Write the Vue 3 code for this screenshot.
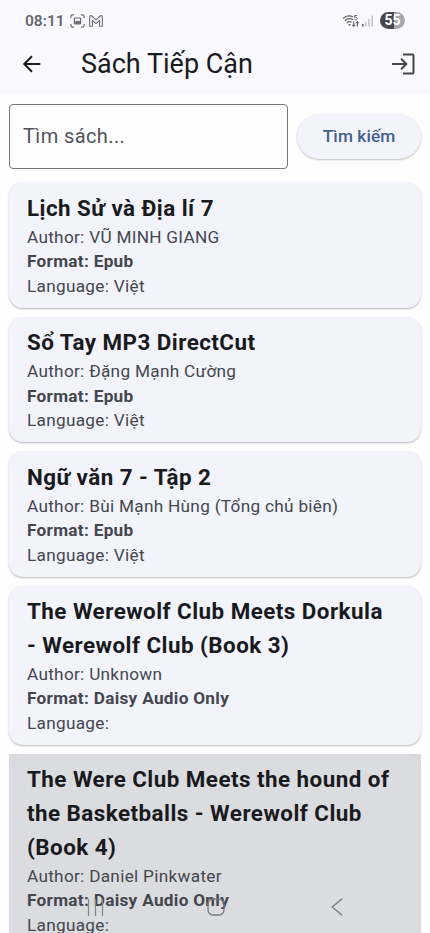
<script setup>
const books = [
  { title: ['Lịch Sử và Địa lí 7'], author: 'VŨ MINH GIANG', format: 'Epub', language: 'Việt' },
  { title: ['Sổ Tay MP3 DirectCut'], author: 'Đặng Mạnh Cường', format: 'Epub', language: 'Việt' },
  { title: ['Ngữ văn 7 - Tập 2'], author: 'Bùi Mạnh Hùng (Tổng chủ biên)', format: 'Epub', language: 'Việt' },
  { title: ['The Werewolf Club Meets Dorkula', '- Werewolf Club (Book 3)'], author: 'Unknown', format: 'Daisy Audio Only', language: '' },
  { title: ['The Were Club Meets the hound of', 'the Basketballs - Werewolf Club', '(Book 4)'], author: 'Daniel Pinkwater', format: 'Daisy Audio Only', language: '', pressed: true }
]
</script>

<template>
  <div class="screen">
    <header class="top">
      <div class="status">
        <span class="clock">08:11</span>
        <svg class="shot" width="15" height="14" viewBox="0 0 15 14" fill="none" stroke="#68686c" stroke-width="1.2">
          <path d="M4 .8H2.6Q.9.8.9 2.5V4M11 .8h1.4q1.7 0 1.7 1.7V4M.9 10v1.5q0 1.7 1.7 1.7H4M14.1 10v1.5q0 1.7-1.7 1.7H11" />
          <rect x="4.4" y="4" width="6.2" height="5.8" rx=".6" />
          <path d="M5 9.4V8l1.6-1.4 1.2 1 1.2-1.2 1.4 1.6v1.4z" fill="#68686c" stroke="none" />
        </svg>
        <svg class="mail" width="14" height="12" viewBox="0 0 15 12" preserveAspectRatio="none" fill="none" stroke="#68686c" stroke-width="1.1" stroke-linejoin="round">
          <path d="M.7 11.3V2.1C.7.7 2 .3 3 1l4.5 3.8L12 1c1-.7 2.3-.3 2.3 1.1v9.2h-3V5.4L7.5 8.6 3.7 5.4v5.9z" />
        </svg>
        <span class="spacer"></span>
        <svg class="wifi" width="18" height="14" viewBox="0 0 18 14" fill="none" stroke="#626266" stroke-width="1.3">
          <path d="M1 4.4C3.6 2 7.5 1.3 11 2.8M2.8 6.7c2.3-2.1 5.4-2.5 8.2-1M4.8 8.8c1.4-1.2 3.2-1.5 4.8-.7" />
          <path d="M6.2 10.6Q7.6 9.6 9 10.6L7.6 12z" fill="#626266" stroke="none" />
          <path d="M15.2 1.5h-2.5v2c1.2-.4 2.5-.1 2.5 1.1 0 1.3-1.5 1.5-2.6.9" stroke-width="1" />
          <path d="M11.7 7.5v4.8M10.2 10.8l1.5 1.5 1.5-1.5M15.3 12.5V7.7M13.8 9.2l1.5-1.5 1.5 1.5" stroke-width="1.1" />
        </svg>
        <svg class="signal" width="12" height="12" viewBox="0 0 12 12">
          <rect x="0" y="9" width="1.5" height="2.5" fill="#58585c" />
          <path d="M3 6.7h1.5v4.8H3zM6.2 3.7h1.5v7.8H6.2zM9.5.5H11v11H9.5z" fill="#c4c4c8" />
        </svg>
        <span class="battery">55</span>
      </div>
      <div class="bar">
        <svg class="back" width="20" height="20" viewBox="0 0 20 20" fill="none" stroke="#1a1b20" stroke-width="2">
          <path d="M19.3 10H3M11 2.2L3.2 10l7.8 7.8" />
        </svg>
        <h1>Sách Tiếp Cận</h1>
        <svg class="login" width="24" height="22" viewBox="0 0 24 22" fill="none" stroke="#44474e" stroke-width="2">
          <path d="M1 11h14.3M10.1 5.8l5.2 5.2-5.2 5.2" />
          <path d="M12 1.6h9.2q1.3 0 1.3 1.2v16.4q0 1.2-1.3 1.2H12" />
        </svg>
      </div>
    </header>

    <main>
      <div class="search">
        <div class="field">Tìm sách...</div>
        <button>Tìm kiếm</button>
      </div>
      <div class="list">
        <div v-for="book in books" :key="book.title[0]" class="slot" :class="{ pressed: book.pressed }">
          <article class="card">
            <h2><span v-for="line in book.title" :key="line">{{ line }}</span></h2>
            <p>Author: {{ book.author }}</p>
            <p class="format">Format: {{ book.format }}</p>
            <p>Language: {{ book.language }}</p>
          </article>
        </div>
      </div>
    </main>

    <nav class="system">
      <svg width="17" height="17" viewBox="0 0 17 17" stroke="#85868a" stroke-width="1.2"><path d="M1.5 0v17M8.5 0v17M15.5 0v17" /></svg>
      <svg class="home" width="18" height="18" viewBox="0 0 18 18" fill="none" stroke="#77787c" stroke-width="1.3"><rect x="1" y="1" width="16" height="16" rx="5" /></svg>
      <svg width="12" height="18" viewBox="0 0 12 18" fill="none" stroke="#77787c" stroke-width="1.3"><path d="M11.2.8L1.2 9l10 8.2" /></svg>
    </nav>
  </div>
</template>

<style>
body { background: #fefefe; }
</style>

<style scoped>
.screen {
  position: relative;
  width: 430px;
  height: 933px;
  overflow: hidden;
  background: #fefefe;
  font-family: Roboto, "Noto Sans", sans-serif;
  color: #44474e;
}
.top { height: 95px; background: #f9f9ff; }
.status { display: flex; align-items: center; height: 41px; padding: 0 25px; }
.clock { font-size: 15.5px; font-weight: 600; letter-spacing: 0; width: 45px; color: #68686c; }
.mail { margin-left: 4px; }
.spacer { flex: 1; }
.signal { margin: 0 6px 0 2px; }
.battery {
  width: 25px; height: 17px; border-radius: 9px; text-align: center;
  font-size: 14px; line-height: 17px; font-weight: 700; color: #fff;
  background: linear-gradient(90deg, #48484b 55%, #a9a9ad 55%);
}
.bar { display: flex; align-items: center; height: 45px; padding: 0 15px 0 21px; }
h1 { margin: 0 0 0 40px; flex: 1; font-size: 27px; line-height: 36px; font-weight: 400; color: #1a1b20; }
.search { display: flex; align-items: center; gap: 9px; padding: 9px 9px 0; }
.field {
  box-sizing: border-box; width: 279px; height: 65px; padding: 0 13px;
  border: 1px solid #77787c; border-radius: 4px;
  font-size: 20px; line-height: 62px; letter-spacing: .4px; color: #505258;
}
button {
  width: 124px; height: 45px; padding: 0 0 2px; border: 0; border-radius: 23px; background: #f2f3fb;
  font-family: inherit; font-size: 17.2px; font-weight: 500; letter-spacing: .1px; color: #415f8c;
  box-shadow: 0 1px 2px rgba(0, 0, 0, .26);
}
.list { display: flex; flex-direction: column; gap: 8.8px; padding: 13px 9px 0; }
.card {
  padding: 9.6px 18px 9.4px; border-radius: 14px; background: #f2f3fb;
  box-shadow: 0 1px 2px rgba(0, 0, 0, .28);
}
.pressed { background: #dadbdf; }
.pressed .card { background: #dbdce0; box-shadow: 0 0 2px rgba(0, 0, 0, .08); }
h2 { margin: 0 0 -.6px; font-size: 22.4px; line-height: 33.6px; font-weight: 700; letter-spacing: .46px; color: #191a20; }
h2 span { display: block; white-space: nowrap; }
p { margin: 0; font-size: 17.2px; line-height: 24.6px; letter-spacing: .3px; white-space: nowrap; }
.format { font-weight: 700; }
.system {
  position: absolute; left: 87px; top: 898px; width: 256px;
  display: flex; justify-content: space-between; align-items: center;
}
.home { margin-right: 3px; }
</style>
